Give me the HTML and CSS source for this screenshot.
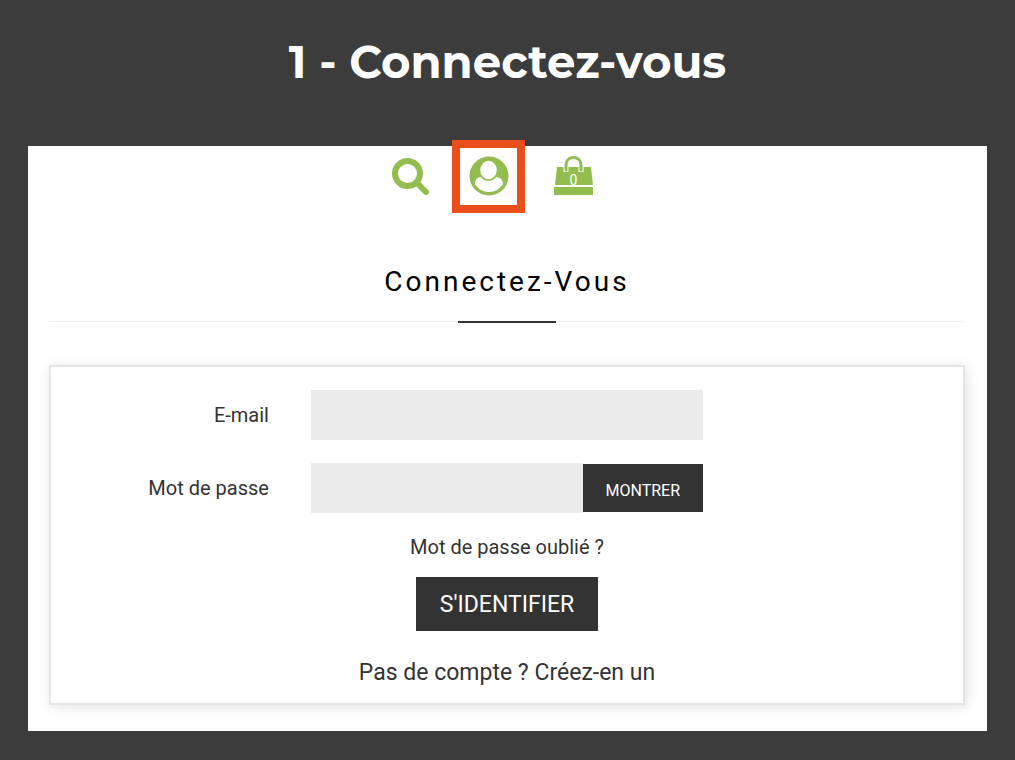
FILE: index.html
```html
<!DOCTYPE html>
<html lang="fr">
<head>
    <meta charset="UTF-8">
    <meta name="viewport" content="width=device-width, initial-scale=1.0">
    <title>Connectez-vous</title>
    <link rel="stylesheet" href="styles.css">
</head>
<body>
    <h1 class="step-title">1 - Connectez-vous</h1>
    <main class="panel">
        <nav class="shop-nav">
            <a href="#" class="nav-link" aria-label="Rechercher">
                <svg width="37" height="38" viewBox="0 0 37 38">
                    <circle cx="15.500" cy="16.500" r="12.500" fill="none" stroke="#93bd4f" stroke-width="6"/>
                    <path d="M25 26 L34 35" stroke="#93bd4f" stroke-width="6" stroke-linecap="round"/>
                </svg>
            </a>
            <a href="#" class="nav-link nav-link-active" aria-label="Mon compte">
                <svg width="40" height="40" viewBox="0 0 40 40">
                    <circle cx="20" cy="20" r="19.500" fill="#93bd4f"/>
                    <path d="M6 28 C6 24 8 21 12 21 C14 23.500 17 24.500 20 24.500 C23 24.500 25 23.500 27 21 C31 21 34 24 34 28 C31 33 26 36 20 36 C14 36 9 33 6 28 Z" fill="#fff"/>
                    <ellipse cx="19.500" cy="14" rx="9" ry="10" fill="#fff" stroke="#93bd4f" stroke-width="1.500"/>
                </svg>
            </a>
            <a href="#" class="nav-link nav-cart" aria-label="Panier">
                <svg width="40" height="40" viewBox="0 0 40 40">
                    <path d="M3 11 H37 L39 29 H1 Z M0 31 H39 V39 H0 Z" fill="#93bd4f"/>
                    <path d="M12 16 V9 C12 -1 27 -1 27 9 V16" fill="none" stroke="#fff" stroke-width="5"/>
                    <path d="M12 14 V9 C12 -1 27 -1 27 9 V14" fill="none" stroke="#93bd4f" stroke-width="3" stroke-linecap="round"/>
                    <text x="19.500" y="29" text-anchor="middle" class="cart-count">0</text>
                </svg>
            </a>
        </nav>
        <h2 class="page-title">Connectez-Vous</h2>
        <form class="login-card">
            <div class="form-row">
                <label for="email">E-mail</label>
                <input type="email" id="email" name="email">
            </div>
            <div class="form-row">
                <label for="password">Mot de passe</label>
                <div class="password-group">
                    <input type="password" id="password" name="password">
                    <button type="button" class="show-btn">MONTRER</button>
                </div>
            </div>
            <a href="#" class="forgot-link">Mot de passe oublié ?</a>
            <button type="submit" class="submit-btn">S'IDENTIFIER</button>
            <a href="#" class="register-link">Pas de compte ? Créez-en un</a>
        </form>
    </main>
</body>
</html>
```
FILE: styles.css
```css
* {
    box-sizing: border-box;
}
body {
    margin: 0;
    padding: 32px 28px 28px;
    background-color: #3c3c3c;
    color: #333;
    font-family: Roboto, Arial, sans-serif;
}
.step-title {
    margin: 0 0 54px;
    color: #fff;
    font-family: Montserrat, Inter, sans-serif;
    font-size: 45px;
    font-weight: 700;
    line-height: 60px;
    text-align: center;
}
.panel {
    padding: 0 22px 26px 21px;
    background-color: #fff;
}
.shop-nav {
    display: flex;
    justify-content: center;
    align-items: center;
    gap: 23px;
    height: 60px;
    padding-right: 28px;
}
.nav-link {
    display: flex;
    flex: none;
}
.nav-link-active {
    justify-content: center;
    align-items: center;
    width: 73px;
    height: 73px;
    border: 8px solid #e94e1b;
}
.nav-cart {
    padding-left: 6px;
}
.cart-count {
    fill: #fff;
    font-size: 14px;
}
.page-title {
    display: flex;
    flex-direction: column;
    align-items: center;
    margin: 54px 0 43px;
    border-bottom: 1px solid #f0f0f0;
    color: #000;
    font-size: 28px;
    font-weight: 400;
    letter-spacing: 3px;
    line-height: 44px;
}
.page-title::after {
    content: "";
    width: 98px;
    height: 2px;
    margin: 17px 0 -2px;
    background-color: #333;
}
.login-card {
    display: flex;
    flex-direction: column;
    align-items: center;
    padding: 23px 0 15px;
    border: 2px solid #e5e5e5;
    box-shadow: 2px 2px 12px rgba(0, 0, 0, 0.12);
    font-size: 20px;
}
.form-row {
    display: grid;
    grid-template-columns: 1fr 43% 1fr;
    align-items: center;
    width: 100%;
    margin-bottom: 23px;
}
.form-row label {
    padding-right: 42px;
    text-align: right;
}
.form-row input {
    width: 100%;
    min-width: 0;
    height: 50px;
    padding: 0 12px;
    border: none;
    background-color: #ebebeb;
    font: inherit;
}
.password-group {
    display: flex;
    align-items: center;
}
.show-btn,
.submit-btn {
    flex: none;
    border: none;
    background-color: #333;
    color: #fff;
    font-family: inherit;
    cursor: pointer;
}
.show-btn {
    height: 48px;
    padding: 4px 23px 0;
    font-size: 16px;
}
.login-card a {
    color: #333;
    text-decoration: none;
}
.forgot-link {
    line-height: 22px;
    margin-bottom: 19px;
}
.submit-btn {
    height: 54px;
    margin-bottom: 27px;
    padding: 0 24px;
    font-size: 23px;
}
.register-link {
    font-size: 23px;
    line-height: 30px;
}
```
